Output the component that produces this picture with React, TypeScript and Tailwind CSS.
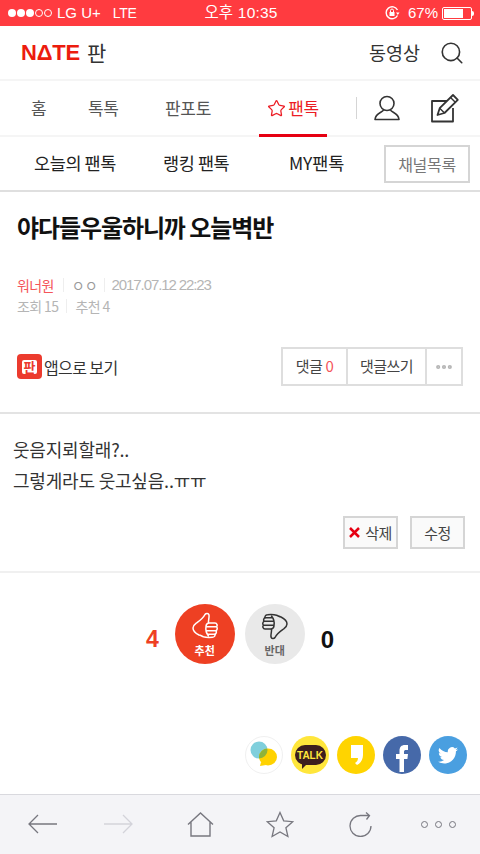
import React from "react";
import { Search, Star, MoreHorizontal } from "lucide-react";

const kr = "font-['Noto_Sans_CJK_KR','Noto_Sans',sans-serif]";

const Thumb = ({ color, className }: { color: string; className?: string }) => (
  <svg width="26" height="28" viewBox="0 0 26 28" fill="none" stroke={color} strokeWidth="1.5" strokeLinejoin="round" strokeLinecap="round" className={className}>
    <path d="M13 2.500c1-1.500 3.500-1.500 4 .5.400 2.500-.8 5-.5 8h6.500c2 0 2.800 2.500 1.500 3.800 1.200 1.200.8 3.200-.5 3.900.8 1.300.2 3-1 3.500.2 1.800-.8 3-2.500 3.100-3.500.3-6.500.3-9-.6-2-.8-3-1.500-4.500-1.700C3 21 1 18.500 1 16c0-2.500 1.500-3.500 3.500-5C8 8.500 11 6.500 13 2.500z" />
    <path d="M16.500 11c-1.500.5-2.500 1.800-2.500 3.500M14 14.800h9.800M14.500 18.700h9.500M16 22.200h7.300M14 14.500c-.5 3 0 6.500 2.500 9.500" />
  </svg>
);

const StatusBar = () => (
  <div className="flex h-[26px] items-center justify-between bg-[#ff3b40] pl-[8px] pr-[6px] text-[15px] text-white font-['Liberation_Sans','Noto_Sans_CJK_KR',sans-serif]">
    <div className="flex w-[190px] items-center">
      <div className="mr-[5px] flex items-center gap-[1px]">
        <span className="size-[8px] rounded-full bg-white" />
        <span className="size-[8px] rounded-full bg-white" />
        <span className="size-[8px] rounded-full bg-white" />
        <span className="size-[8px] rounded-full border border-white" />
        <span className="size-[8px] rounded-full border border-white" />
      </div>
      <span>LG U+</span>
      <span className="ml-[12px] text-[14px] tracking-[-0.3px]">LTE</span>
    </div>
    <div className="text-[15.5px] tracking-[0.2px]">오후 10:35</div>
    <div className="flex w-[190px] items-center justify-end">
      <svg width="16" height="16" viewBox="0 0 16 16" fill="none" stroke="white" strokeWidth="1.4">
        <path d="M13.5 10.5A6 6 0 1 1 13.5 5" />
        <rect x="5.5" y="7" width="5" height="4" fill="white" stroke="none" />
        <path d="M6.500 7V5.500a1.500 1.500 0 0 1 3 0V7" strokeWidth="1" />
        <path d="M12 7.500h3.500L13.800 10z" fill="white" stroke="none" />
      </svg>
      <span className="ml-[8px]">67%</span>
      <div className="ml-[4px] flex items-center">
        <div className="flex h-[13px] w-[30px] items-center rounded-[2px] border border-white p-[1px]">
          <div className="h-full w-[19px] bg-white" />
        </div>
        <div className="h-[5px] w-[2px] rounded-r-sm bg-white" />
      </div>
    </div>
  </div>
);

const TopBar = () => (
  <div className="flex h-[55px] items-center justify-between border-b-2 border-[#f5f5f5] pl-[21px] pr-[15px]">
    <div className="flex items-center">
      <span className="font-['Liberation_Sans',sans-serif] text-[22px] font-bold leading-none tracking-[-0.2px] text-[#ec1c0e]">NΔTE</span>
      <span className={`${kr} ml-[7px] text-[21px] text-[#333]`}>판</span>
    </div>
    <div className="flex items-center gap-[19px]">
      <span className={`${kr} text-[18.5px] text-[#333]`}>동영상</span>
      <Search size={26} strokeWidth={1.5} className="text-[#333]" />
    </div>
  </div>
);

const MainNav = () => (
  <div className={`${kr} flex h-[56px] items-stretch border-b-2 border-[#f5f5f5] pl-[31px] text-[17px] tracking-[-0.3px] text-[#555]`}>
    <span className="flex w-[57px] items-center">홈</span>
    <span className="flex w-[77px] items-center">톡톡</span>
    <span className="flex w-[94px] items-center">판포토</span>
    <div className="relative flex w-[68px] items-center justify-center text-[#ec1c24]">
      <Star size={19} strokeWidth={1.6} />
      <span className="ml-[2px]">팬톡</span>
      <div className="absolute -bottom-[2px] left-0 h-[3px] w-full bg-[#e60012]" />
    </div>
    <div className="ml-[29px] my-[16px] w-px bg-[#d5d5d5]" />
    <div className="ml-[17px] flex items-center">
      <svg width="26" height="26" viewBox="0 0 26 26" fill="none" stroke="#333" strokeWidth="1.6" strokeLinejoin="round">
        <circle cx="13" cy="8.500" r="7" />
        <path d="M9.500 15c-1 2.500-8 2.800-8.500 9.500h24c-.5-6.700-7.500-7-8.500-9.500" />
      </svg>
    </div>
    <div className="ml-[30px] flex items-center">
      <svg width="30" height="30" viewBox="0 0 30 30" fill="none" stroke="#333" strokeWidth="1.8" strokeLinejoin="round">
        <path d="M17 8H2v20.500h21V15" />
        <path d="M7.500 22l2.200-6.800L23 2l4.800 4.800L14.500 20z" />
        <path d="M20.500 4.500l4.800 4.800M9.700 15.200l4.800 4.800" strokeWidth="1.4" />
      </svg>
    </div>
  </div>
);

const SubNav = () => (
  <div className={`${kr} flex h-[55px] items-center border-b-2 border-[#dfdfdf] pl-[34px] text-[17.5px] tracking-[-0.4px] text-[#222]`}>
    <span className="w-[129px]">오늘의 팬톡</span>
    <span className="w-[126px]">랭킹 팬톡</span>
    <span className="tracking-[-0.1px]">MY팬톡</span>
    <div className="ml-auto mr-[10px] flex h-[38px] w-[86px] items-center justify-center border-2 border-[#d5d5d5] text-[16px] tracking-[-0.3px] text-[#777]">채널목록</div>
  </div>
);

const ArticleHead = () => (
  <div className={`${kr} h-[222px] border-b-2 border-[#e3e3e3] px-[17px]`}>
    <h1 className="mt-[15px] h-[40px] text-[24px] font-bold leading-[40px] tracking-[-1.1px] text-[#111]">야다들우울하니까 오늘벽반</h1>
    <div className="mt-[28px] flex h-[20px] items-center text-[14px] tracking-[-0.6px] text-[#b5b5b5]">
      <span className="text-[#f4555a]">워너원</span>
      <span className="ml-[9px] mr-[8px] h-[14px] w-px bg-[#eee]" />
      <span className="text-[14px] tracking-[0px] text-[#999]">ㅇㅇ</span>
      <span className="ml-[6px] mr-[7px] h-[14px] w-px bg-[#eee]" />
      <span className="font-['Liberation_Sans',sans-serif] text-[15px] tracking-[-1.1px]">2017.07.12 22:23</span>
    </div>
    <div className="mt-[1px] flex h-[20px] items-center text-[14px] tracking-[-0.6px] text-[#b5b5b5]">
      <span>조회 15</span>
      <span className="mx-[8px] h-[14px] w-px bg-[#eee]" />
      <span>추천 4</span>
    </div>
    <div className="mt-[31px] flex items-center justify-between">
      <div className="flex items-center">
        <div className="flex size-[25px] items-center justify-center rounded-[4px] bg-[#ec3b2e]">
          <span className="rounded-[2px] bg-white px-[2px] text-[13px] font-bold leading-[14px] text-[#ec3b2e]">판</span>
        </div>
        <span className="ml-[2px] text-[16px] tracking-[-0.6px] text-[#333]">앱으로 보기</span>
      </div>
      <div className="flex h-[39px] border-2 border-[#dedede] text-[15px] tracking-[-0.5px] text-[#444]">
        <div className="flex w-[63px] items-center justify-center">댓글<span className="ml-[3px] text-[#f4555a]">0</span></div>
        <div className="flex w-[79px] items-center justify-center border-l-2 border-[#dedede]">댓글쓰기</div>
        <div className="flex w-[36px] items-center justify-center border-l-2 border-[#dedede] text-[#b5b5b5]">
          <MoreHorizontal size={20} strokeWidth={3} />
        </div>
      </div>
    </div>
  </div>
);

const ArticleBody = () => (
  <div className={`${kr} h-[159px] border-b-2 border-[#f0f0f0] px-[13px] pt-[20px] text-[18px] leading-[31px] tracking-[-0.2px] text-[#333]`}>
    <p>웃음지뢰할래?..</p>
    <p>그렇게라도 웃고싶음..ㅠㅠ</p>
    <div className="mt-[20px] flex justify-end gap-[12px] pr-[2px] text-[15px] leading-none tracking-[-0.5px]">
      <div className="flex h-[33px] w-[55px] items-center justify-center border-2 border-[#d5d5d5] bg-[#fafafa] text-[#444]">
        <svg width="11" height="11" viewBox="0 0 11 11" stroke="#e60012" strokeWidth="2.5" className="mr-[5px]">
          <path d="M1 1l9 9M10 1l-9 9" />
        </svg>
        삭제
      </div>
      <div className="flex h-[33px] w-[55px] items-center justify-center border-2 border-[#d5d5d5] bg-[#fafafa] text-[#444]">수정</div>
    </div>
  </div>
);

const Vote = () => (
  <div className={`${kr} mt-[31px] flex items-center justify-center`}>
    <span className="mr-[16px] mt-[11px] font-['Liberation_Sans',sans-serif] text-[23px] font-bold text-[#ee4023]">4</span>
    <div className="flex size-[60px] flex-col items-center rounded-full bg-[#ee4023] pt-[8px] text-white">
      <Thumb color="white" />
      <span className="mt-[4px] text-[11px] font-bold leading-[13px]">추천</span>
    </div>
    <div className="ml-[10px] flex size-[60px] flex-col items-center rounded-full bg-[#e9e9e9] pt-[8px]">
      <Thumb color="#333" className="rotate-180" />
      <span className="mt-[4px] text-[11px] font-bold leading-[13px] text-[#666]">반대</span>
    </div>
    <span className="ml-[16px] mt-[11px] font-['Liberation_Sans',sans-serif] text-[24px] font-bold text-[#111]">0</span>
  </div>
);

const Share = () => (
  <div className="mt-[72px] flex justify-end gap-[8px] pr-[13px]">
    <div className="size-[38px] rounded-full border border-[#f0f0f0] bg-white">
      <svg width="36" height="36" viewBox="0 0 36 36">
        <defs>
          <clipPath id="overlap">
            <circle cx="13" cy="13" r="8.500" />
          </clipPath>
        </defs>
        <circle cx="13" cy="13" r="8.500" fill="#7fcfdc" />
        <ellipse cx="22" cy="20" rx="9" ry="8.500" fill="#ffd200" />
        <path d="M15 25l-1 4 6-1z" fill="#ffd200" />
        <ellipse cx="22" cy="20" rx="9" ry="8.500" fill="#8fb33a" clipPath="url(#overlap)" />
      </svg>
    </div>
    <div className="flex size-[38px] items-center justify-center rounded-full bg-[#ffe63b]">
      <div className="relative flex h-[20px] w-[31px] items-center justify-center rounded-full bg-[#3c1e1e]">
        <span className="font-['Liberation_Sans',sans-serif] text-[10px] font-bold text-[#ffe63b]">TALK</span>
        <div className="absolute -bottom-[4px] left-[7px] h-0 w-0 border-r-[6px] border-t-[6px] border-r-transparent border-t-[#3c1e1e]" />
      </div>
    </div>
    <div className="flex size-[38px] items-center justify-center rounded-full bg-[#ffd400]">
      <svg width="13" height="20" viewBox="0 0 13 20">
        <path d="M1 0h12v10c0 4-2 8-6 10l-2-2c2-1 3-3 3-5H1z" fill="white" />
      </svg>
    </div>
    <div className="flex items-end justify-center size-[38px] overflow-hidden rounded-full bg-[#4669a9]">
      <svg width="12" height="28" viewBox="0 0 12 28" className="mb-[2px]">
        <path d="M3.500 28V15H0v-5h3.500V7c0-4 1.800-6 5.500-6h3v5h-2c-1.400 0-2 .6-2 2v2h4l-.6 5H8v13z" fill="white" />
      </svg>
    </div>
    <div className="flex size-[38px] items-center justify-center rounded-full bg-[#4a9fe0]">
      <svg width="20" height="17" viewBox="0 0 24 20">
        <path d="M24 2.400c-.9.4-1.800.7-2.800.8 1-.6 1.800-1.600 2.200-2.700-1 .6-2 1-3.100 1.200A4.900 4.900 0 0 0 11.900 6.200 14 14 0 0 1 1.700 1 4.900 4.900 0 0 0 3.200 7.600c-.8 0-1.600-.2-2.200-.6 0 2.400 1.700 4.400 3.900 4.900-.7.2-1.500.2-2.200.1.600 1.900 2.400 3.300 4.600 3.400A9.900 9.900 0 0 1 0 17.400 14 14 0 0 0 7.500 19.600c9.100 0 14.300-7.700 14-14.600 1-.7 1.800-1.600 2.500-2.600z" fill="white" />
      </svg>
    </div>
  </div>
);

const BottomBar = () => (
  <div className="mt-auto flex h-[60px] items-center border-t border-[#d9d9de] bg-[#f4f4f7] pb-[1px] pl-[28px]">
    <svg width="30" height="20" viewBox="0 0 30 20" fill="none" stroke="#77777f" strokeWidth="1.3"><path d="M29 10H1M10 1l-9 9 9 9" /></svg>
    <svg width="30" height="20" viewBox="0 0 30 20" fill="none" stroke="#d3d3da" strokeWidth="1.3" className="ml-[45px]"><path d="M1 10h28M20 1l9 9-9 9" /></svg>
    <svg width="27" height="25" viewBox="0 0 27 25" fill="none" stroke="#77777f" strokeWidth="1.4" className="ml-[54px]"><path d="M1 12.500 13.500 1 26 12.500M4 10v14h19V10M4 24h19" /></svg>
    <svg width="28" height="27" viewBox="0 0 28 27" fill="none" stroke="#77777f" strokeWidth="1.3" className="ml-[52px]"><path d="m14 1.500 3.700 8.300 9 .9-6.800 6 2 8.800-7.900-4.600-7.900 4.600 2-8.800-6.800-6 9-.9z" /></svg>
    <svg width="24" height="25" viewBox="0 0 24 25" fill="none" stroke="#77777f" strokeWidth="1.3" className="ml-[55px]"><path d="M22 14A10.500 10.500 0 1 1 12 3.500h8M17 .5l3.500 3-3 4" /></svg>
    <div className="ml-[48px] flex gap-[7px]">
      <span className="size-[7px] rounded-full border border-[#77777f]" />
      <span className="size-[7px] rounded-full border border-[#77777f]" />
      <span className="size-[7px] rounded-full border border-[#77777f]" />
    </div>
  </div>
);

const App = () => {
  return (
    <div className="flex h-[854px] w-[480px] flex-col overflow-hidden bg-white">
      <StatusBar />
      <TopBar />
      <MainNav />
      <SubNav />
      <ArticleHead />
      <ArticleBody />
      <Vote />
      <Share />
      <BottomBar />
    </div>
  );
};

export default App;
